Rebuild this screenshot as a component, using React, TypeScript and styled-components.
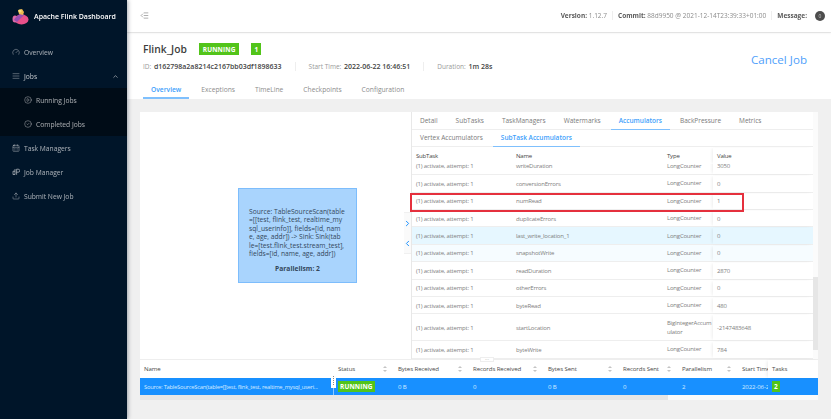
import React from "react";
import styled, { createGlobalStyle } from "styled-components";
import {
  Gauge,
  AlignJustify,
  ChevronUp,
  ChevronRight,
  ChevronLeft,
  CirclePlay,
  CircleCheck,
  CalendarDays,
  Upload,
  IndentDecrease,
} from "lucide-react";

const GlobalStyle = createGlobalStyle`
  html, body {
    margin: 0;
    padding: 0;
    height: 100%;
    background: #f0f0f0;
    font-family: "Open Sans", "Noto Sans", "Liberation Sans", sans-serif;
    overflow: hidden;
  }
  * { box-sizing: border-box; }
`;

const rows = [
  { name: "writeDuration", type: "LongCounter", value: "3050" },
  { name: "conversionErrors", type: "LongCounter", value: "0" },
  { name: "numRead", type: "LongCounter", value: "1" },
  { name: "duplicateErrors", type: "LongCounter", value: "0" },
  { name: "last_write_location_1", type: "LongCounter", value: "0", tint: "#e6f7ff" },
  { name: "snapshotWrite", type: "LongCounter", value: "0", tint: "#f6fcff" },
  { name: "readDuration", type: "LongCounter", value: "2870" },
  { name: "otherErrors", type: "LongCounter", value: "0" },
  { name: "byteRead", type: "LongCounter", value: "480" },
  { name: "startLocation", type: "BigIntegerAccumulator", value: "-2147483648", tall: true },
  { name: "byteWrite", type: "LongCounter", value: "784" },
];

const App = () => {
  return (
    <>
      <GlobalStyle />
      <Page>
        <Sidebar>
          <Brand>
            <svg width="17" height="17" viewBox="0 0 17 17">
              <ellipse cx="9.5" cy="11.5" rx="7" ry="5" fill="#e8508a" />
              <ellipse cx="3" cy="11" rx="2.5" ry="3.5" fill="#e06aa8" />
              <path d="M2 12c1-3 4-5 8-7l2 2c-2 2-5 5-7 7z" fill="#9a4fb0" />
              <path d="M6 2l4-1 2 3-1 3-4-1z" fill="#edb84f" />
              <circle cx="8" cy="3" r="1.6" fill="#f8dc7a" />
            </svg>
            <BrandTitle>Apache Flink Dashboard</BrandTitle>
          </Brand>
          <Menu>
            <MenuItem><Gauge size={8} strokeWidth={1.5} /> Overview</MenuItem>
            <MenuItem>
              <AlignJustify size={8} strokeWidth={1.5} /> <BrightLabel>Jobs</BrightLabel>
              <Caret><ChevronUp size={7} strokeWidth={2.5} /></Caret>
            </MenuItem>
            <SubMenu>
              <SubItem><CirclePlay size={8} strokeWidth={1.5} /> Running Jobs</SubItem>
              <SubItem><CircleCheck size={8} strokeWidth={1.5} /> Completed Jobs</SubItem>
            </SubMenu>
            <MenuItem><CalendarDays size={8} strokeWidth={1.5} /> Task Managers</MenuItem>
            <MenuItem>
              <svg width="8" height="8" viewBox="0 0 8 8" fill="none" stroke="currentColor" strokeWidth="0.8">
                <path d="M3 1v5.5M3 3.2H1v3.3h2M4.6 6.8V1.2h1.6a1.3 1.3 0 0 1 0 3H4.6" />
              </svg>
              Job Manager
            </MenuItem>
            <MenuItem><Upload size={8} strokeWidth={1.5} /> Submit New Job</MenuItem>
          </Menu>
        </Sidebar>

        <Main>
          <TopBar>
            <IndentDecrease size={9} strokeWidth={1.4} color="#666" />
            <TopInfo>
              <InfoPart><b>Version:</b> 1.12.7</InfoPart>
              <InfoPart><b>Commit:</b> 88d9950 @ 2021-12-14T23:39:33+01:00</InfoPart>
              <InfoPart $last><b>Message:</b></InfoPart>
              <MessageBadge>0</MessageBadge>
            </TopInfo>
          </TopBar>

          <Summary>
            <SummaryTop>
              <div>
                <TitleRow>
                  <JobName>Flink_Job</JobName>
                  <Tag>RUNNING</Tag>
                  <Tag $square>1</Tag>
                </TitleRow>
                <MetaRow>
                  <MetaPart>ID: <b>d162798a2a8214c2167bb03df1898633</b></MetaPart>
                  <MetaPart>Start Time: <b>2022-06-22 16:46:51</b></MetaPart>
                  <MetaPart $last>Duration: <b>1m 28s</b></MetaPart>
                </MetaRow>
              </div>
              <CancelJob>Cancel Job</CancelJob>
            </SummaryTop>
            <JobTabs>
              <JobTab $active>Overview</JobTab>
              <JobTab>Exceptions</JobTab>
              <JobTab>TimeLine</JobTab>
              <JobTab>Checkpoints</JobTab>
              <JobTab>Configuration</JobTab>
            </JobTabs>
          </Summary>

          <Content>
            <Panel>
              <UpperArea>
                <GraphArea>
                  <GraphNode>
                    <div>
                      Source: TableSourceScan(table<br />
                      =[[test, flink_test, realtime_my<br />
                      sql_userinfo]], fields=[id, nam<br />
                      e, age, addr]) -&gt; Sink: Sink(tab<br />
                      le=[test.flink_test.stream_test],<br />
                      fields=[id, name, age, addr])
                    </div>
                    <NodeFoot>Parallelism: 2</NodeFoot>
                  </GraphNode>
                </GraphArea>
                <CollapseStrip>
                  <CollapseBtn>
                    <ChevronRight size={9} strokeWidth={2.6} />
                    <ChevronLeft size={9} strokeWidth={2.6} />
                  </CollapseBtn>
                </CollapseStrip>
                <DetailPane>
                  <TabRow>
                    <PaneTab>Detail</PaneTab>
                    <PaneTab>SubTasks</PaneTab>
                    <PaneTab>TaskManagers</PaneTab>
                    <PaneTab>Watermarks</PaneTab>
                    <PaneTab $active>Accumulators</PaneTab>
                    <PaneTab>BackPressure</PaneTab>
                    <PaneTab>Metrics</PaneTab>
                  </TabRow>
                  <TabRow>
                    <PaneTab>Vertex Accumulators</PaneTab>
                    <PaneTab $active>SubTask Accumulators</PaneTab>
                  </TabRow>
                  <AccHead>
                    <span>SubTask</span>
                    <span>Name</span>
                    <span>Type</span>
                    <ValueCell>Value</ValueCell>
                  </AccHead>
                  <AccBody>
                    <AccList>
                      {rows.map((r) => (
                        <AccRow key={r.name} $tint={r.tint} $tall={r.tall}>
                          <span>(1) activate, attempt: 1</span>
                          <span>{r.name}</span>
                          <TypeCell>{r.type}</TypeCell>
                          <ValueCell>{r.value}</ValueCell>
                        </AccRow>
                      ))}
                    </AccList>
                  </AccBody>
                  <Highlight />
                </DetailPane>
                <ScrollTrack><ScrollThumb /></ScrollTrack>
                <ResizeHandle>···</ResizeHandle>
              </UpperArea>

              <VertexTable>
                <VertexHead>
                  <HeadCell>Name</HeadCell>
                  <HeadCell $sort>Status</HeadCell>
                  <HeadCell $sort>Bytes Received</HeadCell>
                  <HeadCell $sort>Records Received</HeadCell>
                  <HeadCell $sort>Bytes Sent</HeadCell>
                  <HeadCell $sort>Records Sent</HeadCell>
                  <HeadCell $sort>Parallelism</HeadCell>
                  <HeadCell>Start Time</HeadCell>
                  <TasksHead>Tasks</TasksHead>
                </VertexHead>
                <VertexRow>
                  <NameCell>
                    <NameText>Source: TableSourceScan(table=[[test, flink_test, realtime_mysql_useri...</NameText>
                    <NameGrip />
                  </NameCell>
                  <BodyCell><Tag $small>RUNNING</Tag></BodyCell>
                  <BodyCell>0 B</BodyCell>
                  <BodyCell>0</BodyCell>
                  <BodyCell>0 B</BodyCell>
                  <BodyCell>0</BodyCell>
                  <BodyCell>2</BodyCell>
                  <BodyCell>2022-06-2.</BodyCell>
                  <BodyCell><Tag $square $small>2</Tag></BodyCell>
                </VertexRow>
                <TableScroll><TableScrollThumb /></TableScroll>
              </VertexTable>
            </Panel>
          </Content>
        </Main>
      </Page>
    </>
  );
};

export default App;

const Page = styled.div`
  display: flex;
  width: 831px;
  height: 419px;
  overflow: hidden;
  filter: blur(0.3px);
`;

const Sidebar = styled.aside`
  width: 127px;
  flex-shrink: 0;
  background: #001529;
  box-shadow: 1px 0 4px rgba(0, 21, 41, 0.35);
  z-index: 2;
`;

const Brand = styled.div`
  display: flex;
  align-items: center;
  gap: 5px;
  height: 32px;
  padding-left: 12px;
`;

const BrandTitle = styled.span`
  color: #fff;
  font-size: 7px;
  font-weight: 600;
`;

const Menu = styled.nav`
  margin-top: 8px;
  color: rgba(255, 255, 255, 0.65);
  font-size: 6.7px;
`;

const MenuItem = styled.div`
  display: flex;
  align-items: center;
  gap: 4px;
  height: 24px;
  padding-left: 12px;
`;

const BrightLabel = styled.span`
  color: rgba(255, 255, 255, 0.75);
`;

const Caret = styled.span`
  display: flex;
  margin-left: auto;
  margin-right: 8px;
`;

const SubMenu = styled.div`
  background: #000c17;
`;

const SubItem = styled(MenuItem)`
  padding-left: 24px;
`;

const Main = styled.main`
  flex: 1;
  min-width: 0;
  display: flex;
  flex-direction: column;
`;

const TopBar = styled.header`
  display: flex;
  align-items: center;
  justify-content: space-between;
  height: 32px;
  padding: 0 6px 1px 13px;
  background: #fff;
  box-shadow: 0 1px 2px rgba(0, 0, 0, 0.08);
  z-index: 1;
`;

const TopInfo = styled.div`
  display: flex;
  align-items: center;
  color: #8c8c8c;
  font-size: 6.5px;

  b {
    color: #595959;
    font-weight: 700;
  }
`;

const InfoPart = styled.span<{ $last?: boolean }>`
  padding-right: ${(p) => (p.$last ? "0" : "5px")};
  margin-right: ${(p) => (p.$last ? "8px" : "5px")};
  border-right: ${(p) => (p.$last ? "none" : "1px solid #eee")};
`;

const MessageBadge = styled.span`
  display: flex;
  align-items: center;
  justify-content: center;
  width: 10px;
  height: 10px;
  border-radius: 50%;
  background: #4d4d4d;
  color: #ccc;
  font-size: 5px;
`;

const Summary = styled.section`
  height: 66px;
  margin-top: 1px;
  padding: 0 24px 0 16px;
  background: #fff;
  display: flex;
  flex-direction: column;
`;

const SummaryTop = styled.div`
  display: flex;
  align-items: flex-start;
  justify-content: space-between;
  padding-top: 9px;
`;

const TitleRow = styled.div`
  display: flex;
  align-items: center;
  height: 14px;
  gap: 12px;
`;

const JobName = styled.span`
  color: #3d3d3d;
  font-size: 10.3px;
  font-weight: 600;
`;

const Tag = styled.span<{ $square?: boolean; $small?: boolean }>`
  display: inline-flex;
  align-items: center;
  justify-content: center;
  height: ${(p) => (p.$small ? "11px" : "12px")};
  padding: 0 ${(p) => (p.$small ? "2px" : p.$square ? "3px" : "4px")};
  background: #52c41a;
  color: #fff;
  font-size: 6.5px;
  font-weight: 700;
  letter-spacing: 0.1px;
`;

const MetaRow = styled.div`
  display: flex;
  align-items: center;
  margin-top: 6px;
  color: #999;
  font-size: 6.5px;

  b {
    color: #444;
    font-size: 7px;
    font-weight: 600;
    margin-left: 1px;
  }
`;

const MetaPart = styled.span<{ $last?: boolean }>`
  padding-right: 13px;
  margin-right: 13px;
  border-right: ${(p) => (p.$last ? "none" : "1px solid #eee")};
`;

const CancelJob = styled.span`
  margin-top: 10px;
  color: #4f9ffb;
  font-size: 11.6px;
`;

const JobTabs = styled.div`
  display: flex;
  margin-top: auto;
  height: 17px;
`;

const JobTab = styled.span<{ $active?: boolean }>`
  padding: 3px 8px 0;
  margin-right: 4px;
  color: ${(p) => (p.$active ? "#40a0fb" : "#8c8c8c")};
  font-size: 6.7px;
  font-weight: ${(p) => (p.$active ? 600 : 400)};
  border-bottom: 2px solid ${(p) => (p.$active ? "#7fc0fd" : "transparent")};
`;

const Content = styled.div`
  flex: 1;
  padding: 13px 13px 19px 13px;
  background: #f0f0f0;
  min-height: 0;
`;

const Panel = styled.div`
  height: 100%;
  display: flex;
  flex-direction: column;
  background: #fff;
`;

const UpperArea = styled.div`
  position: relative;
  height: 248px;
  flex-shrink: 0;
  display: flex;
  border-bottom: 1px solid #eee;
`;

const GraphArea = styled.div`
  position: relative;
  width: 264px;
  flex-shrink: 0;
`;

const GraphNode = styled.div`
  position: absolute;
  left: 98px;
  top: 76px;
  width: 119px;
  height: 95px;
  padding: 19px 0 0 10px;
  background: #a9d4fd;
  border: 1px solid #7dbdfc;
  color: #33475b;
  font-size: 6.7px;
  line-height: 8.4px;
  white-space: nowrap;
`;

const NodeFoot = styled.div`
  margin-top: 7px;
  padding-right: 10px;
  text-align: center;
  font-weight: 700;
`;

const CollapseStrip = styled.div`
  position: relative;
  z-index: 1;
  width: 7px;
  flex-shrink: 0;
  padding-top: 100px;
`;

const CollapseBtn = styled.div`
  display: flex;
  flex-direction: column;
  align-items: center;
  justify-content: space-around;
  width: 7px;
  height: 42px;
  background: #fafafa;
  color: #1890ff;
  border-top: 1px solid #f0f0f0;
  border-bottom: 1px solid #f0f0f0;

  svg {
    flex-shrink: 0;
    overflow: visible;
  }
`;

const DetailPane = styled.div`
  position: relative;
  width: 402px;
  flex-shrink: 0;
  display: flex;
  flex-direction: column;
  border-left: 1px solid #e8e8e8;
`;

const TabRow = styled.div`
  display: flex;
  flex-shrink: 0;
  height: 17.6px;
  border-bottom: 1px solid #eee;
`;

const PaneTab = styled.span<{ $active?: boolean }>`
  display: flex;
  align-items: center;
  height: 17.6px;
  padding: 0 8px;
  margin-right: 2px;
  color: ${(p) => (p.$active ? "#40a0fb" : "#7a7a7a")};
  font-size: 6.5px;
  font-weight: ${(p) => (p.$active ? 600 : 400)};
  border-bottom: 1.5px solid ${(p) => (p.$active ? "#7fc0fd" : "transparent")};
`;

const accColumns = "100px 151px 50px 100px";

const AccHead = styled.div`
  display: grid;
  grid-template-columns: ${accColumns};
  align-items: center;
  flex-shrink: 0;
  height: 16.6px;
  padding-top: 1px;
  color: #444;
  font-size: 6px;
  letter-spacing: -0.2px;
  background: #fff;

  > span {
    padding-left: 4px;
  }
`;

const AccBody = styled.div`
  flex: 1;
  min-height: 0;
  overflow: hidden;
`;

const AccList = styled.div`
  margin-top: -6px;
`;

const AccRow = styled.div<{ $tint?: string; $tall?: boolean }>`
  display: grid;
  grid-template-columns: ${accColumns};
  align-items: center;
  height: ${(p) => (p.$tall ? "27px" : "17.4px")};
  padding-top: 1px;
  background: ${(p) => p.$tint || "#fff"};
  border-bottom: 1px solid #eee;
  color: #808080;
  font-size: 6px;
  letter-spacing: -0.2px;

  > span {
    padding-left: 4px;
  }
`;

const TypeCell = styled.span`
  overflow-wrap: anywhere;
  line-height: 9px;
`;

const ValueCell = styled.span`
  align-self: stretch;
  display: flex;
  align-items: center;
  box-shadow: -2px 0 3px -1px rgba(0, 0, 0, 0.07);
`;

const Highlight = styled.div`
  position: absolute;
  left: -2px;
  top: 81px;
  width: 334px;
  height: 19px;
  border: 2px solid #e5303d;
  pointer-events: none;
`;

const ScrollTrack = styled.div`
  flex: 1;
  background: #fbfbfb;
  padding-top: 165px;
`;

const ScrollThumb = styled.div`
  height: 73px;
  background: #e6e6e6;
`;

const ResizeHandle = styled.div`
  position: absolute;
  left: 340px;
  bottom: -3px;
  width: 14px;
  height: 5px;
  line-height: 3px;
  text-align: center;
  background: #fff;
  border: 1px solid #eee;
  color: #999;
  font-size: 5px;
  z-index: 1;
`;

const VertexTable = styled.div`
  flex: 1;
  display: flex;
  flex-direction: column;
`;

const vertexColumns = "194px 60px 75px 75px 75px 59px 60px 30px 50px";

const VertexHead = styled.div`
  display: grid;
  grid-template-columns: ${vertexColumns};
  height: 18px;
  align-items: center;
  color: #4a4a4a;
  font-size: 6.1px;
  letter-spacing: -0.1px;
`;

const HeadCell = styled.span<{ $sort?: boolean }>`
  position: relative;
  display: flex;
  align-items: center;
  height: 100%;
  padding: 0 0 1px 4px;
  white-space: nowrap;
  overflow: hidden;

  ${(p) =>
    p.$sort
      ? `&::before, &::after {
          content: "";
          position: absolute;
          right: 7px;
          border-left: 2px solid transparent;
          border-right: 2px solid transparent;
        }
        &::before {
          top: 6px;
          border-bottom: 2.5px solid #c4c4c4;
        }
        &::after {
          top: 9.5px;
          border-top: 2.5px solid #c4c4c4;
        }`
      : ""}
`;

const TasksHead = styled(HeadCell)`
  box-shadow: -2px 0 3px -1px rgba(0, 0, 0, 0.08);
`;

const VertexRow = styled.div`
  display: grid;
  grid-template-columns: ${vertexColumns};
  height: 17px;
  align-items: center;
  background: #1890ff;
  color: #d6ebff;
  font-size: 6.1px;
  letter-spacing: -0.13px;
`;

const NameCell = styled.span`
  position: relative;
  padding-left: 4px;
  white-space: nowrap;
  height: 100%;
  display: flex;
  align-items: center;
  border-right: 1px solid #8ec8ff;
`;

const NameText = styled.span`
  font-size: 5.8px;
  letter-spacing: -0.25px;
`;

const NameGrip = styled.span`
  position: absolute;
  right: -3px;
  top: -5px;
  width: 5px;
  height: 15px;
  background: #fff;

  &::after {
    content: "";
    position: absolute;
    left: 2px;
    top: 3px;
    bottom: 3px;
    border-left: 1px dotted #888;
  }
`;

const BodyCell = styled.span`
  display: flex;
  align-items: center;
  padding-left: 4px;
  white-space: nowrap;
  overflow: hidden;
`;

const TableScroll = styled.div`
  flex: 1;
  background: #fafafa;
`;

const TableScrollThumb = styled.div`
  width: 528px;
  height: 100%;
  background: #e6e6e6;
`;
